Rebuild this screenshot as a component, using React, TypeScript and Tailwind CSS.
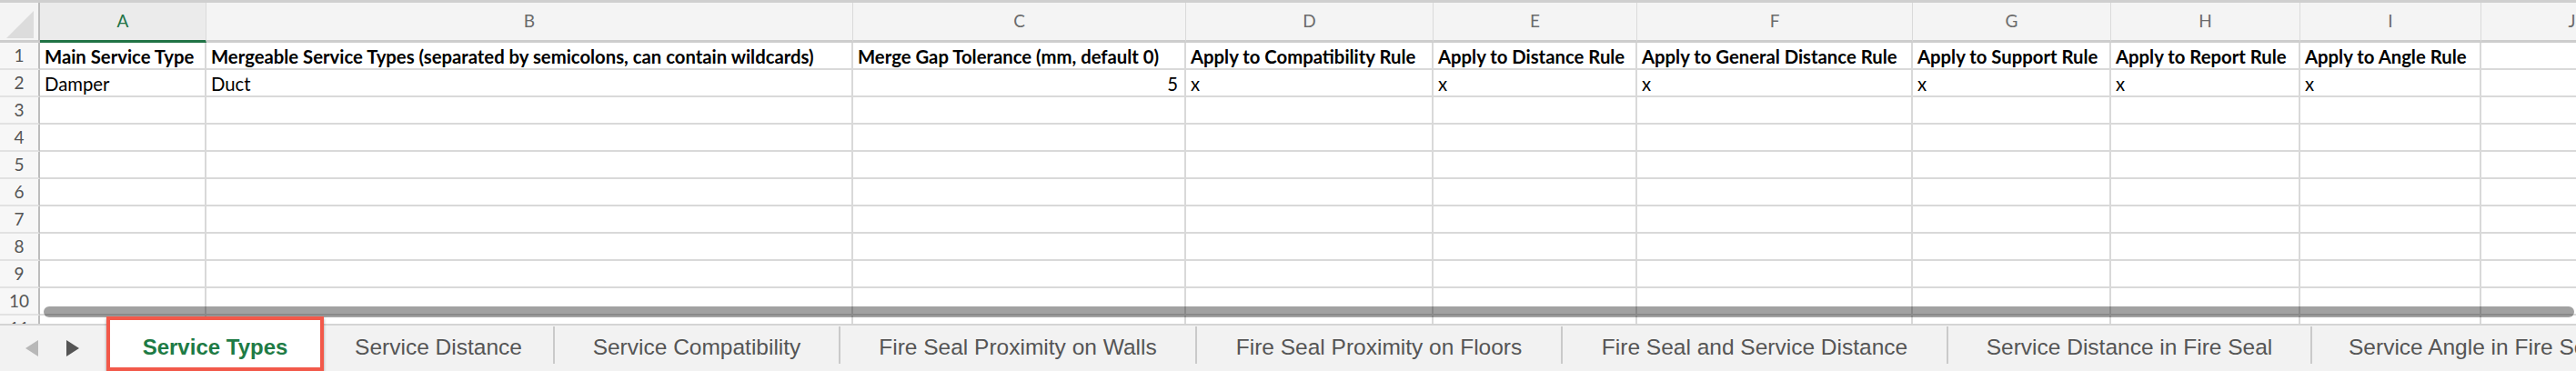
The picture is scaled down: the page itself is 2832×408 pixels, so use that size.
import React from "react";

const cols = [
  { l: "A", w: "w-[183px]" },
  { l: "B", w: "w-[711px]" },
  { l: "C", w: "w-[366px]" },
  { l: "D", w: "w-[272px]" },
  { l: "E", w: "w-[224px]" },
  { l: "F", w: "w-[303px]" },
  { l: "G", w: "w-[218px]" },
  { l: "H", w: "w-[208px]" },
  { l: "I", w: "w-[199px]" },
  { l: "J", w: "w-[200px]" },
];

const rows: string[][] = [
  [
    "Main Service Type",
    "Mergeable Service Types (separated by semicolons, can contain wildcards)",
    "Merge Gap Tolerance (mm, default 0)",
    "Apply to Compatibility Rule",
    "Apply to Distance Rule",
    "Apply to General Distance Rule",
    "Apply to Support Rule",
    "Apply to Report Rule",
    "Apply to Angle Rule",
    "",
  ],
  ["Damper", "Duct", "5", "x", "x", "x", "x", "x", "x", ""],
];

const tabs = [
  { name: "Service Distance", w: "w-[252px] justify-center" },
  { name: "Service Compatibility", w: "w-[312px] justify-center" },
  { name: "Fire Seal Proximity on Walls", w: "w-[390px] justify-center" },
  { name: "Fire Seal Proximity on Floors", w: "w-[400px] justify-center" },
  { name: "Fire Seal and Service Distance", w: "w-[422px] justify-center" },
  { name: "Service Distance in Fire Seal", w: "w-[398px] justify-center" },
  { name: "Service Angle in Fire Seal", w: "w-[380px] justify-start pl-[40px]" },
];

const cellFont = { fontFamily: "Lato, 'Open Sans', sans-serif" };

function HeaderRow() {
  return (
    <div className="flex h-[47px] shrink-0 border-t-[3px] border-[#cfcfcf] bg-[#f4f4f4]">
      {/* corner */}
      <div className="flex w-[44px] shrink-0 items-end justify-end border-r-2 border-b-[3px] border-r-[#bdbdbd] border-b-[#cdcdcd] pr-[5px] pb-[2px]">
        <svg width="30" height="30" viewBox="0 0 30 30">
          <polygon points="30,0 30,30 0,30" fill="#dcdcdc" />
        </svg>
      </div>
      {cols.map((c, i) => (
        <div
          key={c.l}
          className={`${c.w} flex shrink-0 items-center justify-center border-r border-r-[#dadada] text-[19px] ${
            i === 0
              ? "border-b-[3px] border-b-[#217346] bg-[#ebebeb] text-[#217346]"
              : "border-b-[3px] border-b-[#cdcdcd] text-[#6b6b6b]"
          }`}
          style={cellFont}
        >
          {c.l}
        </div>
      ))}
    </div>
  );
}

function Row({ n, data }: { n: number; data?: string[] }) {
  return (
    <div className="flex h-[30px] shrink-0">
      <div
        className="flex w-[44px] shrink-0 items-center justify-center border-r-2 border-b-2 border-r-[#bdbdbd] border-b-[#e2e2e2] bg-[#f7f7f7] pt-[1px] text-[19px] text-[#555]"
        style={cellFont}
      >
        {n}
      </div>
      {cols.map((c, i) => {
        const v = data ? data[i] : "";
        return (
          <div
            key={c.l}
            className={`${c.w} flex shrink-0 items-center overflow-hidden whitespace-nowrap border-r-2 border-b-2 border-[#d9d9d9] px-[5px] pt-[2px] text-[20.3px] text-black ${
              n === 1 ? "font-bold" : ""
            } ${i === 2 && n === 2 ? "justify-end pr-[7px]" : ""}`}
            style={cellFont}
          >
            {v}
          </div>
        );
      })}
    </div>
  );
}

export default function App() {
  return (
    <div className="flex h-[408px] w-[2832px] flex-col overflow-hidden bg-white">
      {/* Sheet grid */}
      <div className="relative h-[356px] shrink-0 overflow-hidden">
        <HeaderRow />
        {Array.from({ length: 11 }, (_, i) => (
          <Row key={i} n={i + 1} data={rows[i]} />
        ))}
        {/* horizontal scrollbar */}
        <div className="absolute top-[337px] left-[48px] right-[2px] h-[12px] rounded-full bg-[rgba(0,0,0,0.37)]" />
      </div>

      {/* Sheet tabs */}
      <div
        className="flex h-[52px] shrink-0 items-stretch border-t-2 border-[#d4d4d4] bg-[#f2f2f2] text-[24.5px] text-[#555]"
        style={{ fontFamily: "'Liberation Sans', Arial, sans-serif" }}
      >
        <div className="flex w-[117px] shrink-0 items-center gap-[31px] pl-[28px]">
          <svg width="14" height="18" viewBox="0 0 14 18">
            <polygon points="14,0 14,18 0,9" fill="#b8b8b8" />
          </svg>
          <svg width="14" height="18" viewBox="0 0 14 18">
            <polygon points="0,0 0,18 14,9" fill="#555" />
          </svg>
        </div>
        <div className="relative z-10 -mt-[10px] flex h-[60px] w-[239px] shrink-0 items-center justify-center border-4 border-[#f2594a] bg-white pt-[8px] text-[24px] font-bold text-[#1e7b45] shadow-[0_2px_3px_rgba(0,0,0,0.35)]">
          Service Types
        </div>
        {tabs.map((t, i) => (
          <React.Fragment key={t.name}>
            <div className={`${t.w} flex shrink-0 items-center whitespace-nowrap pb-[1px]`}>
              {t.name}
            </div>
            {i < tabs.length - 1 && <div className="mt-[1px] h-[41px] w-[2px] shrink-0 bg-[#cacaca]" />}
          </React.Fragment>
        ))}
      </div>
    </div>
  );
}
